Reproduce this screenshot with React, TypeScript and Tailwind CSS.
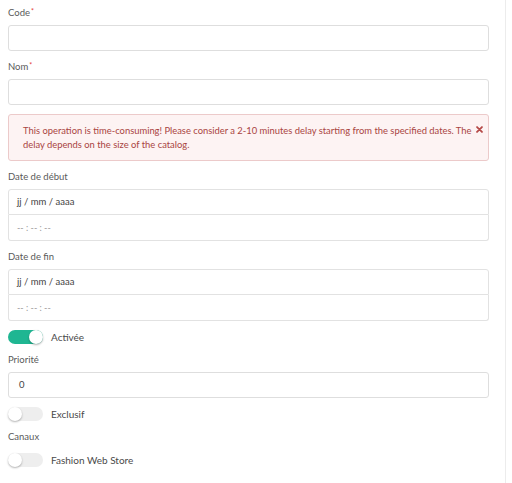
import { useState } from 'react'

function Label({ text, required }: { text: string; required?: boolean }) {
  return (
    <div className="h-[14px] leading-[14px] mb-[5px] text-[9.5px] text-[#5a5a5a]">
      {text}
      {required && <span className="text-[#e53935] text-[7px] align-top ml-[1px] leading-[10px]">*</span>}
    </div>
  )
}

function TextInput({ value, className = '' }: { value?: string; className?: string }) {
  return (
    <div className={`h-[26px] border border-[#dedede] rounded-[3px] bg-white pl-[10px] flex items-center text-[9.5px] text-[#444] ${className}`}>
      {value}
    </div>
  )
}

function DateTime() {
  return (
    <div>
      <div className="h-[26px] border border-[#e2e2e2] rounded-t-[3px] bg-white pl-[8px] flex items-center text-[9.5px] text-[#444]">
        jj / mm / aaaa
      </div>
      <div className="h-[26px] border border-t-0 border-[#e2e2e2] rounded-b-[3px] bg-white pl-[8px] flex items-center text-[9px] text-[#9a9a9a]">
        -- : -- : --
      </div>
    </div>
  )
}

function Toggle({ label, initial }: { label: string; initial: boolean }) {
  const [on, setOn] = useState(initial)
  return (
    <div className="flex items-center h-[14px]">
      <button
        onClick={() => setOn(!on)}
        className={`relative w-[35px] h-[14px] rounded-full shrink-0 ${on ? 'bg-[#1fb692]' : 'bg-[#eeeeee]'}`}
      >
        <span
          className={`absolute top-0 w-[14px] h-[14px] rounded-full bg-white shadow-[0_1px_2px_rgba(0,0,0,0.3)] ${on ? 'right-0' : 'left-0'}`}
        />
      </button>
      <span className="ml-[8px] text-[10px] text-[#4a4a4a]">{label}</span>
    </div>
  )
}

export default function App() {
  return (
    <div className="w-[512px] h-[483px] bg-white font-['Lato','Liberation_Sans',sans-serif] flex">
      <div className="w-[506px] border-r border-[#ececec] pl-[8px] pr-[16px] pt-[6px]">
        <Label text="Code" required />
        <TextInput />

        <div className="mt-[9px]">
          <Label text="Nom" required />
          <TextInput />
        </div>

        {/* Alert */}
        <div className="mt-[9px] h-[47px] border border-[#eccaca] bg-[#fdf3f3] rounded-[3px] pl-[14px] pr-[5px] pt-[9px] flex text-[#a94442] text-[9.4px] leading-[14px]">
          <p className="flex-1">
            This operation is time-consuming! Please consider a 2-10 minutes delay starting from the specified dates. The delay depends on the size of the catalog.
          </p>
          <svg viewBox="0 0 10 10" className="w-[7px] h-[7px] mt-[2px] shrink-0">
            <path d="M1.5 1.5 L8.5 8.5 M8.5 1.5 L1.5 8.5" stroke="#b54a48" strokeWidth="2.6" strokeLinecap="round" />
          </svg>
        </div>

        <div className="mt-[9px]">
          <Label text="Date de début" />
          <DateTime />
        </div>

        <div className="mt-[9px]">
          <Label text="Date de fin" />
          <DateTime />
        </div>

        <div className="mt-[9px]">
          <Toggle label="Activée" initial={true} />
        </div>

        <div className="mt-[9px]">
          <Label text="Priorité" />
          <TextInput value="0" />
        </div>

        <div className="mt-[9px]">
          <Toggle label="Exclusif" initial={false} />
        </div>

        <div className="mt-[9px]">
          <div className="h-[14px] leading-[14px] mb-[9px] text-[9.5px] text-[#5a5a5a]">Canaux</div>
          <Toggle label="Fashion Web Store" initial={false} />
        </div>
      </div>
    </div>
  )
}
